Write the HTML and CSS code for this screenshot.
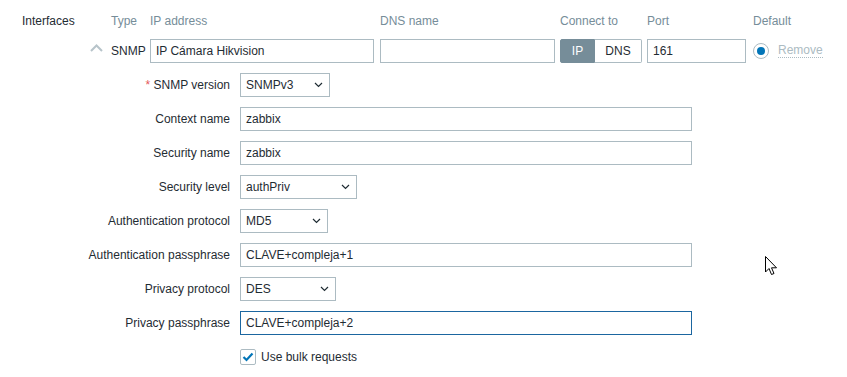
FILE: index.html
```html
<!DOCTYPE html>
<html lang="en">
<head>
<meta charset="utf-8">
<title>Interfaces</title>
<link rel="stylesheet" href="styles.css">
</head>
<body>
<div class="page">
  <div class="iface">
    <div class="iface-title">Interfaces</div>
    <div></div>
    <div class="hdr">Type</div>
    <div class="hdr">IP address</div>
    <div class="hdr">DNS name</div>
    <div class="hdr">Connect to</div>
    <div class="hdr">Port</div>
    <div class="hdr">Default</div>

    <div></div>
    <div class="chev"><svg width="13" height="8" viewBox="0 0 13 8"><path d="M1 7 L6.5 1.5 L12 7" fill="none" stroke="#b7c4ca" stroke-width="2"/></svg></div>
    <div class="type">SNMP</div>
    <div><div class="input w-ip">IP Cámara Hikvision</div></div>
    <div><div class="input w-dns"></div></div>
    <div class="seg"><span class="seg-on">IP</span><span class="seg-off">DNS</span></div>
    <div><div class="input w-port">161</div></div>
    <div class="default"><span class="radio"><span class="dot"></span></span><span class="remove">Remove</span></div>
  </div>

  <div class="form">
    <div class="lbl"><span class="req">*</span> SNMP version</div>
    <div><div class="select w-90"><span>SNMPv3</span><svg width="9" height="6" viewBox="0 0 9 6"><path d="M1 1 L4.5 4.5 L8 1" fill="none" stroke="#1f2c33" stroke-width="1.2"/></svg></div></div>

    <div class="lbl">Context name</div>
    <div><div class="input w-full">zabbix</div></div>

    <div class="lbl">Security name</div>
    <div><div class="input w-full">zabbix</div></div>

    <div class="lbl">Security level</div>
    <div><div class="select w-117"><span>authPriv</span><svg width="9" height="6" viewBox="0 0 9 6"><path d="M1 1 L4.5 4.5 L8 1" fill="none" stroke="#1f2c33" stroke-width="1.2"/></svg></div></div>

    <div class="lbl">Authentication protocol</div>
    <div><div class="select w-88"><span>MD5</span><svg width="9" height="6" viewBox="0 0 9 6"><path d="M1 1 L4.5 4.5 L8 1" fill="none" stroke="#1f2c33" stroke-width="1.2"/></svg></div></div>

    <div class="lbl">Authentication passphrase</div>
    <div><div class="input w-full">CLAVE+compleja+1</div></div>

    <div class="lbl">Privacy protocol</div>
    <div><div class="select w-96"><span>DES</span><svg width="9" height="6" viewBox="0 0 9 6"><path d="M1 1 L4.5 4.5 L8 1" fill="none" stroke="#1f2c33" stroke-width="1.2"/></svg></div></div>

    <div class="lbl">Privacy passphrase</div>
    <div><div class="input w-full focus">CLAVE+compleja+2</div></div>

    <div></div>
    <div class="check-row"><span class="checkbox"><svg width="12" height="10" viewBox="0 0 12 10"><path d="M1.5 5 L4.5 8 L10.5 1.5" fill="none" stroke="#0275b8" stroke-width="2.2"/></svg></span><span>Use bulk requests</span></div>
  </div>

  <svg class="cursor" width="14" height="21" viewBox="0 0 14 21"><path d="M0.5 0.5 L0.5 16 L4 12.5 L6.5 18.5 L9 17.5 L6.5 11.8 L11.5 11.8 Z" fill="#fff" stroke="#000" stroke-width="1" stroke-linejoin="round"/></svg>
</div>
</body>
</html>
```

FILE: styles.css
```css
* { box-sizing: border-box; }
html, body { margin: 0; background: #fff; }
body {
  font-family: "Liberation Sans", Arial, sans-serif;
  font-size: 12px;
  color: #1f2c33;
}
.page {
  position: relative;
  width: 847px;
  height: 377px;
  padding-top: 14px;
}
.iface {
  display: grid;
  grid-template-columns: 86px 25px 39px 230px 180px 87px 106px 1fr;
  grid-template-rows: 14px 24px;
  row-gap: 11px;
  line-height: 14px;
}
.iface-title { padding-left: 22px; }
.hdr { color: #768d99; }
.chev { padding-left: 4px; padding-top: 5px; }
.chev svg { display: block; }
.type { line-height: 24px; }
.input {
  height: 24px;
  border: 1px solid #acbbc2;
  padding: 0 5px;
  line-height: 22px;
  background: #fff;
  white-space: nowrap;
}
.input.focus { border-color: #1b66a0; }
.w-ip { width: 224px; }
.w-dns { width: 175px; }
.w-port { width: 99px; }
.w-full { width: 452px; }
.seg {
  display: flex;
  width: 82px;
  height: 24px;
  line-height: 22px;
}
.seg-on {
  width: 35px;
  text-align: center;
  background: #768d99;
  border: 1px solid #768d99;
  color: #fff;
  border-radius: 2px 0 0 2px;
}
.seg-off {
  flex: 1;
  text-align: center;
  border: 1px solid #acbbc2;
  border-left: none;
  border-radius: 0 2px 2px 0;
}
.default {
  display: flex;
  align-items: center;
  gap: 9px;
  height: 24px;
}
.radio {
  width: 16px;
  height: 16px;
  border: 1px solid #acbbc2;
  border-radius: 50%;
  display: flex;
  align-items: center;
  justify-content: center;
}
.dot {
  width: 8px;
  height: 8px;
  border-radius: 50%;
  background: #0275b8;
}
.remove {
  color: #acbbc2;
  border-bottom: 1px dotted #acbbc2;
  line-height: 13px;
}
.form {
  margin-top: 10px;
  display: grid;
  grid-template-columns: 230px 1fr;
  grid-auto-rows: 24px;
  column-gap: 10px;
  row-gap: 10px;
}
.lbl {
  text-align: right;
  line-height: 24px;
  white-space: nowrap;
}
.req { color: #e45959; }
.select {
  height: 24px;
  border: 1px solid #acbbc2;
  padding: 0 6px 0 5px;
  display: flex;
  align-items: center;
  justify-content: space-between;
}
.select svg { display: block; }
.w-90 { width: 90px; }
.w-117 { width: 117px; }
.w-88 { width: 88px; }
.w-96 { width: 96px; }
.check-row {
  display: flex;
  align-items: center;
  gap: 5px;
  height: 24px;
}
.checkbox {
  width: 16px;
  height: 16px;
  border: 1px solid #acbbc2;
  border-radius: 2px;
  display: flex;
  align-items: center;
  justify-content: center;
}
.checkbox svg { display: block; }
.cursor {
  position: absolute;
  left: 765px;
  top: 256px;
}
```
